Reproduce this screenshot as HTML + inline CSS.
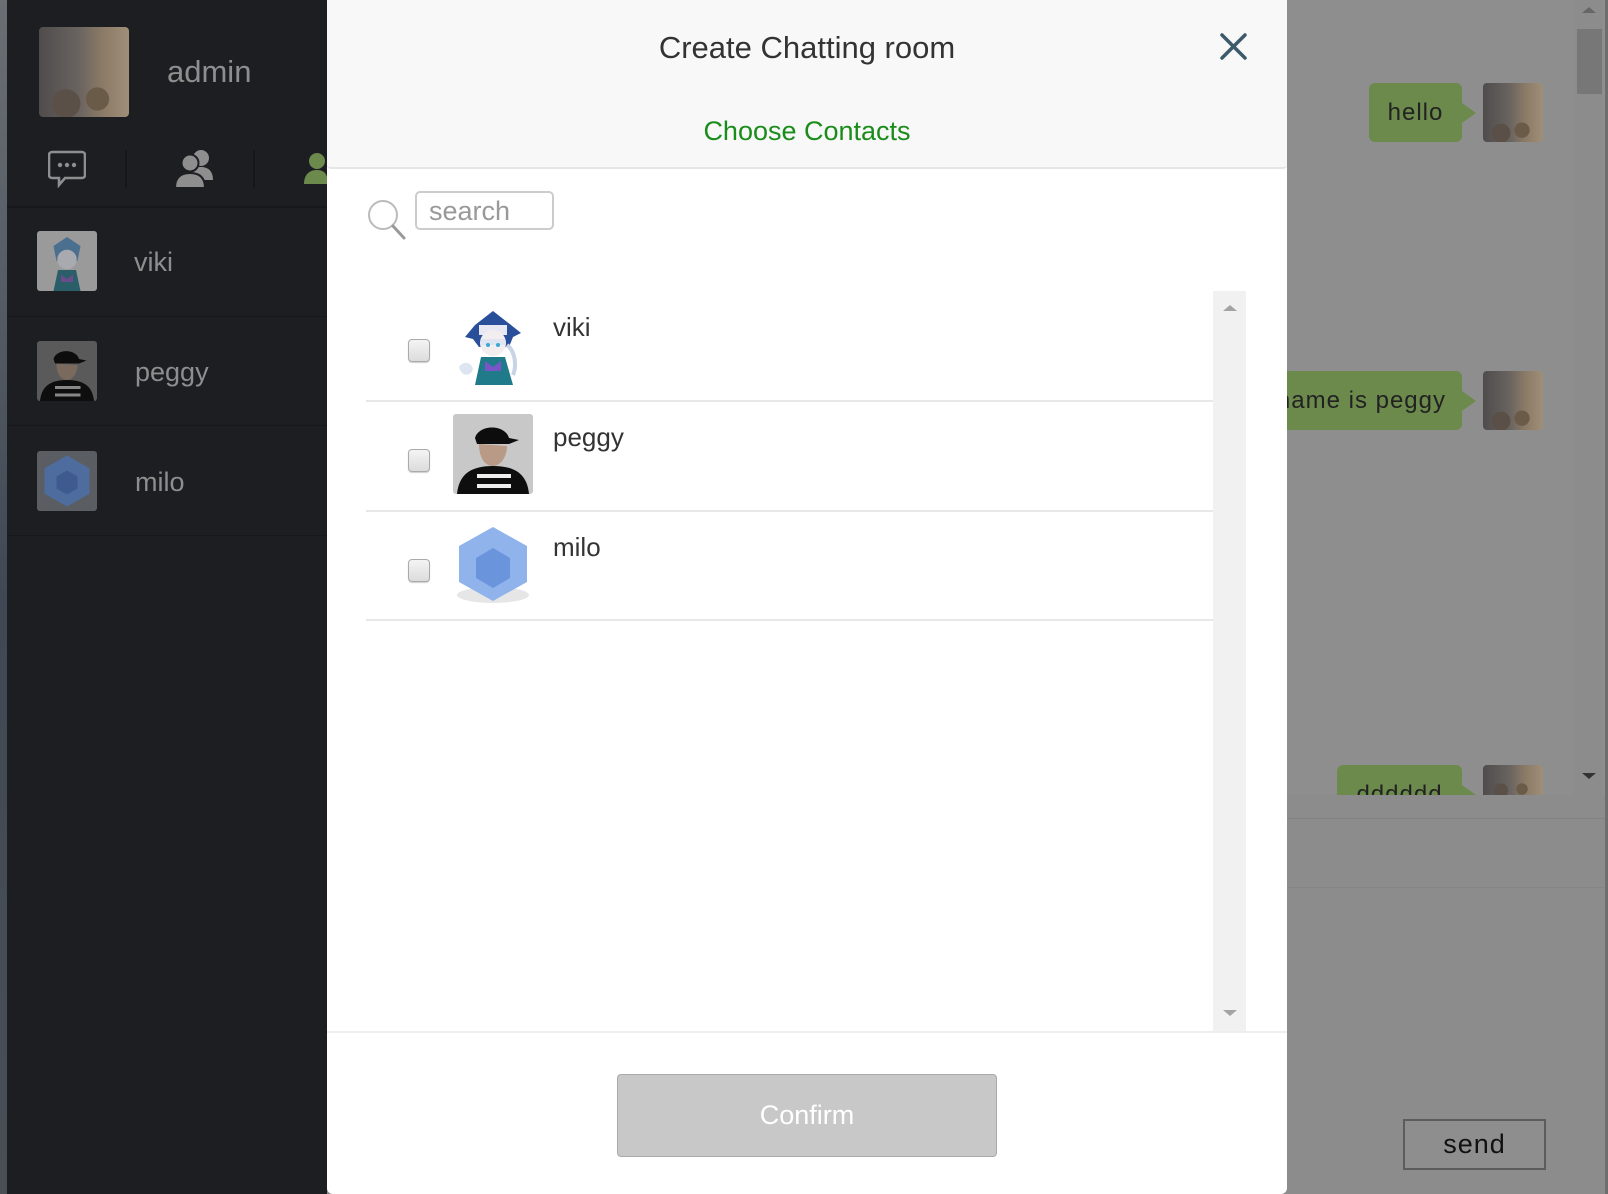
<!DOCTYPE html>
<html><head><meta charset="utf-8"><style>
*{margin:0;padding:0;box-sizing:border-box}
body{width:1608px;height:1194px;overflow:hidden;position:relative;background:#8c8c8c;font-family:"Liberation Sans",sans-serif}
.abs{position:absolute}
.side{left:0;top:0;width:327px;height:1194px;background:#1d1e22}
.strip{left:0;top:0;width:7px;height:1194px;background:linear-gradient(#6b6f74,#3f4854 50%,#4a4f55)}
.name{color:#8e8e8e;font-size:27px}
.sep{height:1px;background:#17181b;left:7px;width:320px}
.modal{left:327px;top:0;width:960px;height:1194px;background:#fff;border-radius:0 0 6px 6px}
.hdr{left:0;top:0;width:960px;height:169px;background:#f8f8f8;border-bottom:2px solid #e6e6e6;border-radius:0 0 4px 4px}
.bub{background:#6c8a4c;color:#222;font-size:24px;height:59px;line-height:59px;border-radius:6px;letter-spacing:1px}
.bub:after{content:"";position:absolute;right:-14px;top:20px;border-left:14px solid #6c8a4c;border-top:10px solid transparent;border-bottom:10px solid transparent}
.cat{background:radial-gradient(circle at 65% 80%,#6a5a48 0 12%,transparent 13%),radial-gradient(circle at 30% 85%,#5a5048 0 14%,transparent 15%),linear-gradient(90deg,#4f4c4c,#6a6460 45%,#8a7a66 70%,#a08f78);border-radius:4px}
.cb{width:22px;height:23px;border:1px solid #aaa;border-radius:4px;background:linear-gradient(#f4f4f4,#dcdcdc);box-shadow:0 1px 1px #ccc}
.row{left:39px;width:847px;height:1px;background:#e8e8e8}
.cn{font-size:26px;color:#333}
</style></head><body>
<div class="abs side"></div>
<div class="abs strip"></div>
<div class="abs cat" style="left:39px;top:27px;width:90px;height:90px"></div>
<div class="abs" style="left:167px;top:54px;color:#8e8e8e;font-size:31px">admin</div>
<svg class="abs" style="left:48px;top:150px" width="38" height="38" viewBox="0 0 38 38"><path d="M4 2h30a3 3 0 0 1 3 3v20a3 3 0 0 1-3 3H17l-6 7v-7H4a3 3 0 0 1-3-3V5a3 3 0 0 1 3-3z" fill="none" stroke="#8e8e8e" stroke-width="2.6"/><circle cx="12" cy="15" r="2.2" fill="#8e8e8e"/><circle cx="19" cy="15" r="2.2" fill="#8e8e8e"/><circle cx="26" cy="15" r="2.2" fill="#8e8e8e"/></svg>
<div class="abs" style="left:125px;top:150px;width:2px;height:38px;background:#16171a"></div>
<div class="abs" style="left:253px;top:150px;width:2px;height:38px;background:#16171a"></div>
<svg class="abs" style="left:174px;top:148px" width="44" height="42" viewBox="0 0 44 42"><circle cx="27" cy="10" r="8" fill="#8e8e8e"/><path d="M16 32c0-10 5-13 11-13s12 3 12 13z" fill="#8e8e8e"/><circle cx="16" cy="15" r="8.5" fill="#8e8e8e" stroke="#1d1e22" stroke-width="2"/><path d="M1 40c0-11 6-15 15-15s15 4 15 15z" fill="#8e8e8e" stroke="#1d1e22" stroke-width="2"/></svg>
<svg class="abs" style="left:302px;top:152px" width="25" height="34" viewBox="0 0 25 34"><circle cx="15" cy="9" r="8" fill="#6c8a4c"/><path d="M2 32c0-10 6-14 13-14s11 4 11 14z" fill="#6c8a4c"/></svg>
<div class="abs sep" style="top:206px;height:2px"></div>
<div class="abs sep" style="top:316px"></div>
<div class="abs sep" style="top:425px"></div>
<div class="abs sep" style="top:535px"></div>
<svg class="abs" style="left:37px;top:231px" width="60" height="60" viewBox="0 0 80 80"><rect width="80" height="80" rx="4" fill="#9a9a9a"/><path d="M22 20l18-12 18 12-4 20H26z" fill="#4a6f8f"/><circle cx="40" cy="38" r="13" fill="#a9a9b0"/><path d="M22 80l6-28h24l6 28z" fill="#2a5f6a"/><path d="M32 58l8 6 8-6v10H32z" fill="#6a4c8c"/></svg>
<svg class="abs" style="left:37px;top:341px" width="60" height="60" viewBox="0 0 80 80"><rect width="80" height="80" rx="4" fill="#5a5a5a"/><path d="M22 24c4-14 30-14 34 0l10 2-10 4H24z" fill="#0d0d0d"/><path d="M26 30c0 14 6 22 14 22s14-10 14-20z" fill="#7a6a5e"/><path d="M4 80c2-20 14-28 36-28s34 8 36 28z" fill="#0e0e0e"/><rect x="24" y="60" width="34" height="4" fill="#888"/><rect x="24" y="70" width="34" height="4" fill="#888"/></svg>
<svg class="abs" style="left:37px;top:451px" width="60" height="60" viewBox="0 0 80 80"><rect width="80" height="80" rx="4" fill="#5a5e63"/><path d="M40 6l30 17v34L40 74 10 57V23z" fill="#4e6c9e"/><path d="M40 26l14 8v16l-14 8-14-8V34z" fill="#3e5a8e"/></svg>
<div class="abs name" style="left:134px;top:247px">viki</div>
<div class="abs name" style="left:135px;top:357px">peggy</div>
<div class="abs name" style="left:135px;top:467px">milo</div>

<div class="abs" style="left:1287px;top:0;width:321px;height:795px;background:#8e8e8e"></div>
<div class="abs" style="left:1574px;top:0;width:28px;height:795px;background:#8c8c8c"></div>
<div class="abs" style="left:1577px;top:29px;width:25px;height:65px;background:#777"></div>
<div class="abs" style="left:1582px;top:7px;border-bottom:6px solid #666;border-left:7px solid transparent;border-right:7px solid transparent"></div>
<div class="abs" style="left:1582px;top:773px;border-top:6px solid #333;border-left:7px solid transparent;border-right:7px solid transparent"></div>
<div class="abs bub" style="left:1369px;top:83px;width:93px;text-align:center">hello</div>
<div class="abs cat" style="left:1483px;top:83px;width:60px;height:59px"></div>
<div class="abs bub" style="left:1270px;top:371px;width:192px;text-align:right;padding-right:16px">name is peggy</div>
<div class="abs cat" style="left:1483px;top:371px;width:60px;height:59px"></div>
<div class="abs" style="left:1337px;top:765px;width:140px;height:30px;overflow:hidden"><div class="abs bub" style="left:0;top:0;width:125px;text-align:center">dddddd</div></div>
<div class="abs cat" style="left:1483px;top:765px;width:60px;height:30px;border-radius:4px 4px 0 0"></div>
<div class="abs" style="left:1287px;top:818px;width:321px;height:1px;background:#828282"></div>
<div class="abs" style="left:1287px;top:887px;width:317px;height:1px;background:#858585"></div>
<div class="abs" style="left:1403px;top:1119px;width:143px;height:51px;border:2px solid #5c5c5c;background:#8e8e8e;color:#111;font-size:27px;text-align:center;line-height:46px;letter-spacing:1px">send</div>
<div class="abs" style="left:1605px;top:0;width:3px;height:1194px;background:#6e6e6e"></div>

<div class="abs modal">
 <div class="abs hdr"></div>
 <div class="abs" style="left:0;width:960px;top:30px;text-align:center;font-size:31px;color:#333">Create Chatting room</div>
 <svg class="abs" style="left:893px;top:33px" width="27" height="27" viewBox="0 0 27 27"><path d="M2 2L25 25M25 2L2 25" stroke="#3d5a6b" stroke-width="3.5" stroke-linecap="round"/></svg>
 <div class="abs" style="left:0;width:960px;top:116px;text-align:center;font-size:27px;color:#1a8c1a">Choose Contacts</div>
 <svg class="abs" style="left:39px;top:198px" width="42" height="44" viewBox="0 0 42 44"><circle cx="17" cy="17" r="14" fill="none" stroke="#bbb" stroke-width="2"/><path d="M27 28l11 12" stroke="#999" stroke-width="3" stroke-linecap="round"/></svg>
 <div class="abs" style="left:88px;top:191px;width:139px;height:39px;border:2px solid #ccc;border-radius:5px;font-size:27px;color:#999;padding-left:12px;line-height:36px">search</div>
 <div class="abs" style="left:886px;top:291px;width:33px;height:740px;background:#f1f1f1"></div>
 <div class="abs" style="left:896px;top:305px;border-bottom:6px solid #a3a3a3;border-left:7px solid transparent;border-right:7px solid transparent"></div>
 <div class="abs" style="left:896px;top:1010px;border-top:6px solid #a3a3a3;border-left:7px solid transparent;border-right:7px solid transparent"></div>
 <div class="abs row" style="top:400px;height:2px"></div>
 <div class="abs row" style="top:510px;height:2px"></div>
 <div class="abs row" style="top:619px;height:2px"></div>
 <div class="abs cb" style="left:81px;top:339px"></div>
 <div class="abs cb" style="left:81px;top:449px"></div>
 <div class="abs cb" style="left:81px;top:559px"></div>
 <svg class="abs" style="left:126px;top:305px" width="80" height="80" viewBox="0 0 80 80"><path d="M22 20l18-14 18 14 10 8-8 4-4 10H26l-6-8-8-2z" fill="#2a4f9a"/><path d="M26 20h28v10H26z" fill="#e8e8f4"/><circle cx="40" cy="38" r="13" fill="#f2eef0"/><path d="M28 34h24v6H28z" fill="#dfe6f2"/><circle cx="35" cy="40" r="2" fill="#3aa8d8"/><circle cx="45" cy="40" r="2" fill="#3aa8d8"/><path d="M22 80l6-28h24l8 28z" fill="#1f7a8a"/><path d="M32 56l8 6 8-6v10H32z" fill="#7a55c8"/><path d="M6 62c4-6 12-6 14 2-2 8-12 8-14-2z" fill="#dde6f0"/><path d="M54 40c8 6 10 20 6 30" stroke="#c8d4e6" stroke-width="4" fill="none"/></svg>
 <svg class="abs" style="left:126px;top:414px" width="80" height="80" viewBox="0 0 80 80"><rect width="80" height="80" rx="3" fill="#c8c8c8"/><path d="M22 24c4-14 30-14 34 0l10 2-10 4H24z" fill="#0d0d0d"/><path d="M26 30c0 14 6 22 14 22s14-10 14-20z" fill="#b89a86"/><path d="M4 80c2-20 14-28 36-28s34 8 36 28z" fill="#0e0e0e"/><rect x="24" y="60" width="34" height="4" fill="#eee"/><rect x="24" y="70" width="34" height="4" fill="#eee"/></svg>
 <svg class="abs" style="left:126px;top:523px" width="80" height="80" viewBox="0 0 80 80"><ellipse cx="40" cy="72" rx="36" ry="8" fill="#e6e6e6"/><path d="M40 4l34 19v36L40 78 6 59V23z" fill="#8fb3ea"/><path d="M40 25l17 10v20L40 65 23 55V35z" fill="#6a95dc"/></svg>
 <div class="abs cn" style="left:226px;top:312px">viki</div>
 <div class="abs cn" style="left:226px;top:422px">peggy</div>
 <div class="abs cn" style="left:226px;top:532px">milo</div>
 <div class="abs" style="left:0;top:1031px;width:960px;height:2px;background:#eee"></div>
 <div class="abs" style="left:290px;top:1074px;width:380px;height:83px;background:#c8c8c8;border:1px solid #aaa;border-radius:4px;color:#fff;font-size:27px;text-align:center;line-height:81px">Confirm</div>
</div>
</body></html>
